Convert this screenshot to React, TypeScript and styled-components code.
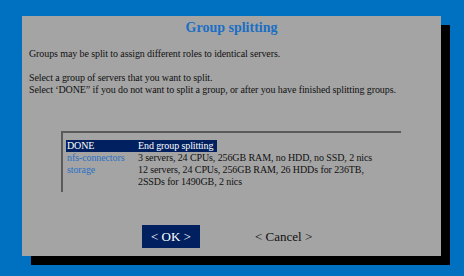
import styled, { createGlobalStyle } from "styled-components";

const GlobalStyle = createGlobalStyle`
  html, body {
    margin: 0;
    padding: 0;
    background: #0070c0;
  }
  body {
    font-family: "Liberation Serif", "Times New Roman", serif;
    color: #000;
  }
`;

type Group = {
  name: string;
  lines: string[];
};

const groups: Group[] = [
  { name: "DONE", lines: ["End group splitting"] },
  {
    name: "nfs-connectors",
    lines: ["3 servers, 24 CPUs, 256GB RAM, no HDD, no SSD, 2 nics"],
  },
  {
    name: "storage",
    lines: [
      "12 servers, 24 CPUs, 256GB RAM, 26 HDDs for 236TB,",
      "2SSDs for 1490GB, 2 nics",
    ],
  },
];

const Screen = styled.div`
  width: 464px;
  height: 276px;
  padding: 16px 0 0 22px;
  box-sizing: border-box;
`;

const Dialog = styled.div`
  width: 419px;
  height: 240px;
  box-sizing: border-box;
  padding: 3px 7px 0;
  background: #a4a4a4;
  box-shadow: 9px 9px 0 #000;
`;

const Title = styled.h1`
  margin: 0 0 11px;
  font-size: 14px;
  line-height: 18px;
  font-weight: bold;
  text-align: center;
  color: #1a6fc4;
`;

const Text = styled.p<{ $gap?: number }>`
  margin: ${(p) => p.$gap || 0}px 0 0;
  font-size: 10px;
  line-height: 12px;
  letter-spacing: -0.1px;
  color: #111;
`;

const ListBox = styled.div`
  margin: 35px 0 0 32px;
  width: 340px;
  box-sizing: border-box;
  padding: 7px 0 4px 3px;
  border-top: 2px solid #5a5a5a;
  border-left: 2px solid #5a5a5a;
  font-size: 10px;
  line-height: 12px;
  letter-spacing: -0.1px;
`;

const Row = styled.div<{ $selected?: boolean }>`
  display: flex;
  width: fit-content;
  padding-right: 4px;
  background: ${(p) => (p.$selected ? "#00205f" : "transparent")};
  color: ${(p) => (p.$selected ? "#fff" : "#111")};
`;

const Name = styled.div<{ $selected?: boolean }>`
  width: 71px;
  padding-left: 1px;
  color: ${(p) => (p.$selected ? "#fff" : "#2a70c4")};
`;

const Info = styled.div``;

const Buttons = styled.div`
  display: flex;
  align-items: center;
  gap: 55px;
  margin: 33px 0 0 113px;
`;

const Button = styled.div<{ $active?: boolean }>`
  height: 23px;
  padding: 0 ${(p) => (p.$active ? 9 : 0)}px;
  display: flex;
  align-items: center;
  font-size: 13px;
  background: ${(p) => (p.$active ? "#00205f" : "transparent")};
  color: ${(p) => (p.$active ? "#fff" : "#111")};
`;

function App() {
  return (
    <Screen>
      <GlobalStyle />
      <Dialog>
        <Title>Group splitting</Title>
        <Text>Groups may be split to assign different roles to identical servers.</Text>
        <Text $gap={12}>
          Select a group of servers that you want to split.
          <br />
          Select ‘DONE” if you do not want to split a group, or after you have
          finished splitting groups.
        </Text>

        <ListBox>
          {groups.map((g, i) => (
            <Row key={g.name} $selected={i === 0}>
              <Name $selected={i === 0}>{g.name}</Name>
              <Info>
                {g.lines.map((l) => (
                  <div key={l}>{l}</div>
                ))}
              </Info>
            </Row>
          ))}
        </ListBox>

        <Buttons>
          <Button $active>&lt; OK &gt;</Button>
          <Button>&lt; Cancel &gt;</Button>
        </Buttons>
      </Dialog>
    </Screen>
  );
}

export default App;
